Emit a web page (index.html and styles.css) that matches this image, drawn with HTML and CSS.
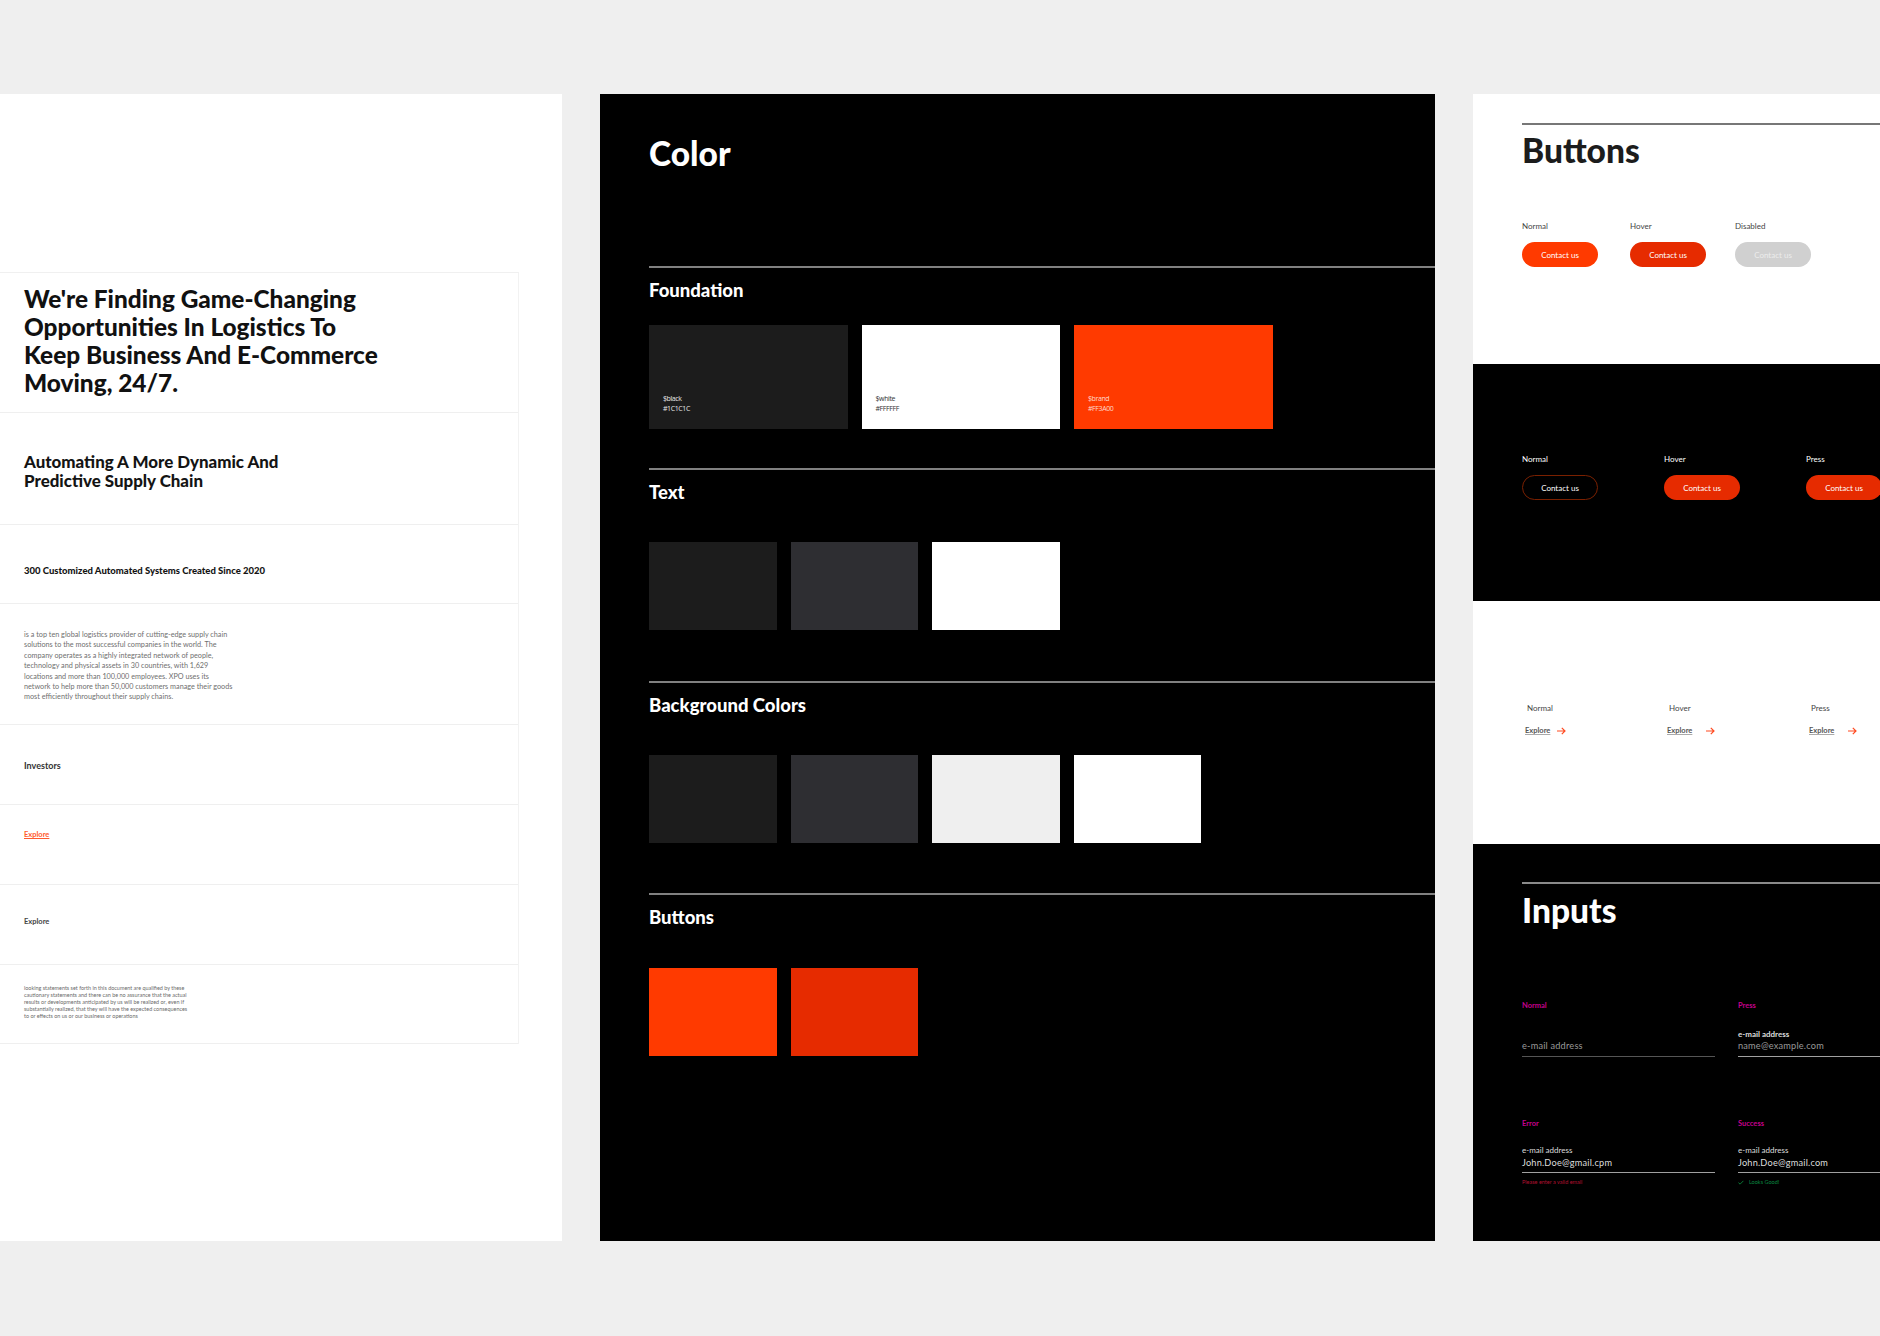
FILE: index.html
```html
<!DOCTYPE html>
<html lang="en">
<head>
<meta charset="utf-8">
<title>Design system</title>
<link rel="stylesheet" href="styles.css">
</head>
<body>
<main class="board">
  <section class="type-panel">
    <div class="type-table">
      <div class="row row-h1"><h1>We're Finding Game-Changing<br>Opportunities In Logistics To<br>Keep Business And E-Commerce<br>Moving, 24/7.</h1></div>
      <div class="row row-h2"><h2>Automating A More Dynamic And<br>Predictive Supply Chain</h2></div>
      <div class="row row-h3"><h3>300 Customized Automated Systems Created Since 2020</h3></div>
      <div class="row row-body"><p>is a top ten global logistics provider of cutting-edge supply chain<br>solutions to the most successful companies in the world. The<br>company operates as a highly integrated network of people,<br>technology and physical assets in 30 countries, with 1,629<br>locations and more than 100,000 employees. XPO uses its<br>network to help more than 50,000 customers manage their goods<br>most efficiently throughout their supply chains.</p></div>
      <div class="row row-nav"><span class="nav-text">Investors</span></div>
      <div class="row row-link"><span class="link-orange">Explore</span></div>
      <div class="row row-link2"><span class="link-dark">Explore</span></div>
      <div class="row row-fine"><p>looking statements set forth in this document are qualified by these<br>cautionary statements and there can be no assurance that the actual<br>results or developments anticipated by us will be realized or, even if<br>substantially realized, that they will have the expected consequences<br>to or effects on us or our business or operations</p></div>
    </div>
  </section>

  <section class="color-panel">
    <h2 class="page-title color-title">Color</h2>
    <div class="color-group group-foundation">
      <h3>Foundation</h3>
      <div class="swatches swatches-foundation">
        <div class="swatch swatch-large c-black"><span>$black</span><span>#1C1C1C</span></div>
        <div class="swatch swatch-large c-white"><span>$white</span><span>#FFFFFF</span></div>
        <div class="swatch swatch-large c-brand"><span>$brand</span><span>#FF3A00</span></div>
      </div>
    </div>
    <div class="color-group group-text">
      <h3>Text</h3>
      <div class="swatches">
        <div class="swatch c-black"></div><div class="swatch c-graphite"></div><div class="swatch c-white"></div>
      </div>
    </div>
    <div class="color-group group-bg">
      <h3>Background Colors</h3>
      <div class="swatches">
        <div class="swatch c-black"></div><div class="swatch c-graphite"></div><div class="swatch c-light"></div><div class="swatch c-white"></div>
      </div>
    </div>
    <div class="color-group group-buttons">
      <h3>Buttons</h3>
      <div class="swatches">
        <div class="swatch c-brand"></div><div class="swatch c-hover"></div>
      </div>
    </div>
  </section>

  <section class="comp-panel">
    <div class="comp comp-buttons">
      <div class="rule rule-dark"></div>
      <h2 class="page-title">Buttons</h2>
      <div class="states states-light">
        <div class="state state-a"><span class="state-label">Normal</span><span class="btn btn-brand">Contact us</span></div>
        <div class="state state-b"><span class="state-label">Hover</span><span class="btn btn-hover">Contact us</span></div>
        <div class="state"><span class="state-label">Disabled</span><span class="btn btn-disabled">Contact us</span></div>
      </div>
    </div>
    <div class="comp comp-dark">
      <div class="states states-dark">
        <div class="state state-c"><span class="state-label">Normal</span><span class="btn btn-outline">Contact us</span></div>
        <div class="state state-c"><span class="state-label">Hover</span><span class="btn btn-hover">Contact us</span></div>
        <div class="state"><span class="state-label">Press</span><span class="btn btn-hover">Contact us</span></div>
      </div>
    </div>
    <div class="comp comp-links">
      <div class="states states-links">
        <div class="state link-state"><span class="state-label">Normal</span><span class="arrow-link arrow-a"><u>Explore</u><svg viewBox="0 0 9 8" class="arrow"><path d="M0 4h8M4.800 .8 8 4 4.800 7.200"/></svg></span></div>
        <div class="state link-state"><span class="state-label">Hover</span><span class="arrow-link arrow-b"><u>Explore</u><svg viewBox="0 0 9 8" class="arrow"><path d="M0 4h8M4.800 .8 8 4 4.800 7.200"/></svg></span></div>
        <div class="state link-state"><span class="state-label">Press</span><span class="arrow-link arrow-b"><u>Explore</u><svg viewBox="0 0 9 8" class="arrow"><path d="M0 4h8M4.800 .8 8 4 4.800 7.200"/></svg></span></div>
      </div>
    </div>
    <div class="comp comp-inputs">
      <div class="rule rule-light"></div>
      <h2 class="page-title">Inputs</h2>
      <div class="input-grid">
        <div class="field field-top">
          <span class="field-state">Normal</span>
          <span class="field-label">&nbsp;</span>
          <span class="field-value placeholder">e-mail address</span>
          <span class="field-line line-dim"></span>
        </div>
        <div class="field field-top">
          <span class="field-state">Press</span>
          <span class="field-label label-bold">e-mail address</span>
          <span class="field-value placeholder">name@example.com</span>
          <span class="field-line"></span>
        </div>
        <div class="field">
          <span class="field-state">Error</span>
          <span class="field-label">e-mail address</span>
          <span class="field-value">John.Doe@gmail.cpm</span>
          <span class="field-line"></span>
          <span class="field-msg msg-error">Please enter a valid email</span>
        </div>
        <div class="field">
          <span class="field-state">Success</span>
          <span class="field-label">e-mail address</span>
          <span class="field-value">John.Doe@gmail.com</span>
          <span class="field-line"></span>
          <span class="field-msg msg-success"><svg viewBox="0 0 8 6" class="check"><path d="M.6 3.200 2.800 5.200 7.200 .8"/></svg>Looks Good!</span>
        </div>
      </div>
    </div>
  </section>
</main>
</body>
</html>
```
FILE: styles.css
```css
* { box-sizing: border-box; }
html, body { margin: 0; padding: 0; }
body {
  width: 1880px;
  height: 1336px;
  overflow: hidden;
  background: #efefef;
  font-family: Lato, "Noto Sans", sans-serif;
  color: #1c1c1c;
}
h1, h2, h3, p { margin: 0; }
.board {
  display: grid;
  grid-template-columns: 562px 835px 407px;
  column-gap: 38px;
  padding-top: 94px;
  width: 1880px;
}

/* Type panel */
.type-panel { background: #fff; height: 1147px; padding-top: 178px; }
.type-table { width: 519px; border-top: 1px solid #f0f0f0; border-right: 1px solid #f2f2f2; }
.row { padding-left: 24px; border-bottom: 1px solid #efefef; }
.row-h1 { height: 140px; padding-top: 12px; }
.row-h2 { height: 112px; padding-top: 39px; }
.row-h3 { height: 79px; padding-top: 39px; }
.row-body { height: 121px; padding-top: 26px; }
.row-nav { height: 80px; padding-top: 35px; }
.row-link { height: 80px; padding-top: 24px; }
.row-link2 { height: 80px; padding-top: 31px; }
.row-fine { height: 79px; padding-top: 20px; }
h1 { font-size: 24.400px; line-height: 27.900px; font-weight: 900; color: #111; }
.row-h2 h2 { font-size: 16.900px; line-height: 19px; font-weight: 900; color: #141414; }
h3 { font-weight: 900; }
.row-h3 h3 { font-size: 9.500px; line-height: 14px; color: #141414; }
.row-body p { font-size: 7.250px; line-height: 10.400px; color: #6f6f6f; white-space: nowrap; }
.nav-text { display: block; font-size: 9px; line-height: 12px; font-weight: 700; color: #333; }
.link-orange { display: block; font-size: 7.500px; line-height: 11px; font-weight: 700; color: #ff5a2e; text-decoration: underline; }
.link-dark { display: block; font-size: 7.500px; line-height: 11px; font-weight: 700; color: #444; }
.row-fine p { font-size: 5.450px; line-height: 7px; color: #6a6a6a; white-space: nowrap; }

/* Color panel */
.color-panel { background: #000; height: 1147px; padding-left: 49px; color: #fff; }
.page-title { font-size: 33.500px; line-height: 38px; font-weight: 900; }
.color-title { padding-top: 40px; height: 172px; }
.color-group { border-top: 2px solid #808080; }
.color-group h3 { font-size: 18.500px; line-height: 22px; padding-top: 11px; height: 57px; color: #fff; }
.swatches { display: flex; gap: 14px; }
.swatch { width: 127.500px; height: 88px; }
.swatch-large { width: 198.500px; height: 104px; padding: 69px 0 0 14px; display: flex; flex-direction: column; font-size: 7px; letter-spacing: -.4px; line-height: 10px; font-family: "Open Sans", sans-serif; }
.group-foundation { height: 202px; }
.group-text { height: 213px; }
.group-text h3, .group-bg h3 { height: 72px; }
.group-buttons h3 { height: 73px; }
.group-bg { height: 212px; }
.c-black { background: #1c1c1c; color: #e8e8e8; }
.c-white { background: #fff; color: #333; }
.c-brand { background: #ff3a00; color: #ffd9cc; }
.c-graphite { background: #2e2e32; }
.c-light { background: #efefef; }
.c-hover { background: #e62b00; }

/* Component panel */
.comp-panel { height: 1147px; display: flex; flex-direction: column; }
.comp { padding-left: 49px; overflow: hidden; }
.comp-buttons { background: #fff; height: 270px; padding-top: 29px; }
.comp-dark { background: #000; height: 237px; padding-top: 90px; color: #fff; }
.comp-links { background: #fff; height: 243px; padding-top: 102px; }
.comp-inputs { background: #000; height: 397px; padding-top: 38px; color: #fff; }
.rule { height: 2px; margin-bottom: 6px; }
.rule-dark { background: #777; }
.rule-light { background: #8a8a8a; }
.states { display: flex; }
.states-light { margin-top: 52px; }
.state { display: flex; flex-direction: column; flex: none; }
.state-a { width: 108px; }
.state-b { width: 105px; }
.state-c { width: 142px; }
.link-state { width: 142px; padding-left: 5px; }
.state-label { font-size: 8px; line-height: 10px; margin-bottom: 11px; color: #444; }
.comp-dark .state-label { color: #fff; }
.btn {
  width: 76px; height: 25px; border-radius: 13px;
  display: flex; align-items: center; justify-content: center;
  font-size: 8px; color: #fff;
}
.btn-brand { background: #ff3a00; }
.btn-hover { background: #e62b00; }
.btn-disabled { background: #d0d0d0; color: #ececec; }
.btn-outline { border: 1px solid #7a2000; }
.arrow-link { display: flex; align-items: center; margin: 2px 0 0 -2px; font-size: 7.500px; font-weight: 700; color: #555; }
.arrow-link u { text-decoration-color: #aaa; }
.arrow-a u { margin-right: 7px; }
.arrow-b u { margin-right: 14px; }
.arrow { width: 9px; height: 8px; fill: none; stroke: #ff4a20; stroke-width: 1.200; }

/* Inputs */
.comp-inputs .page-title { line-height: 40px; }
.input-grid { display: grid; grid-template-columns: 193px 193px; column-gap: 23px; margin-top: 71px; }
.field { display: flex; flex-direction: column; height: 118px; }
.field-state { font-size: 7.500px; line-height: 10px; font-weight: 700; color: #c4008c; }
.field-label { font-size: 8px; line-height: 10px; margin-top: 16px; color: #ddd; }
.label-bold { font-weight: 700; }
.field-value { font-size: 9.200px; line-height: 14px; margin-top: 1px; letter-spacing: .2px; color: #ddd; }
.placeholder { color: #999; }
.field-line { height: 1px; margin-top: 2px; background: #a0a0a0; flex: none; }
.line-dim { background: #555; }
.field-top .field-label { margin-top: 18px; }
.field-top .field-value { margin-top: 0; }
.field-top .field-line { margin-top: 3px; }
.field-msg { font-size: 5.500px; line-height: 8px; margin-top: 5px; display: flex; align-items: center; }
.msg-error { color: #b01030; }
.msg-success { color: #0a8a40; }
.check { width: 6px; height: 5px; margin-right: 5px; fill: none; stroke: #0fa048; stroke-width: 1; }
```
